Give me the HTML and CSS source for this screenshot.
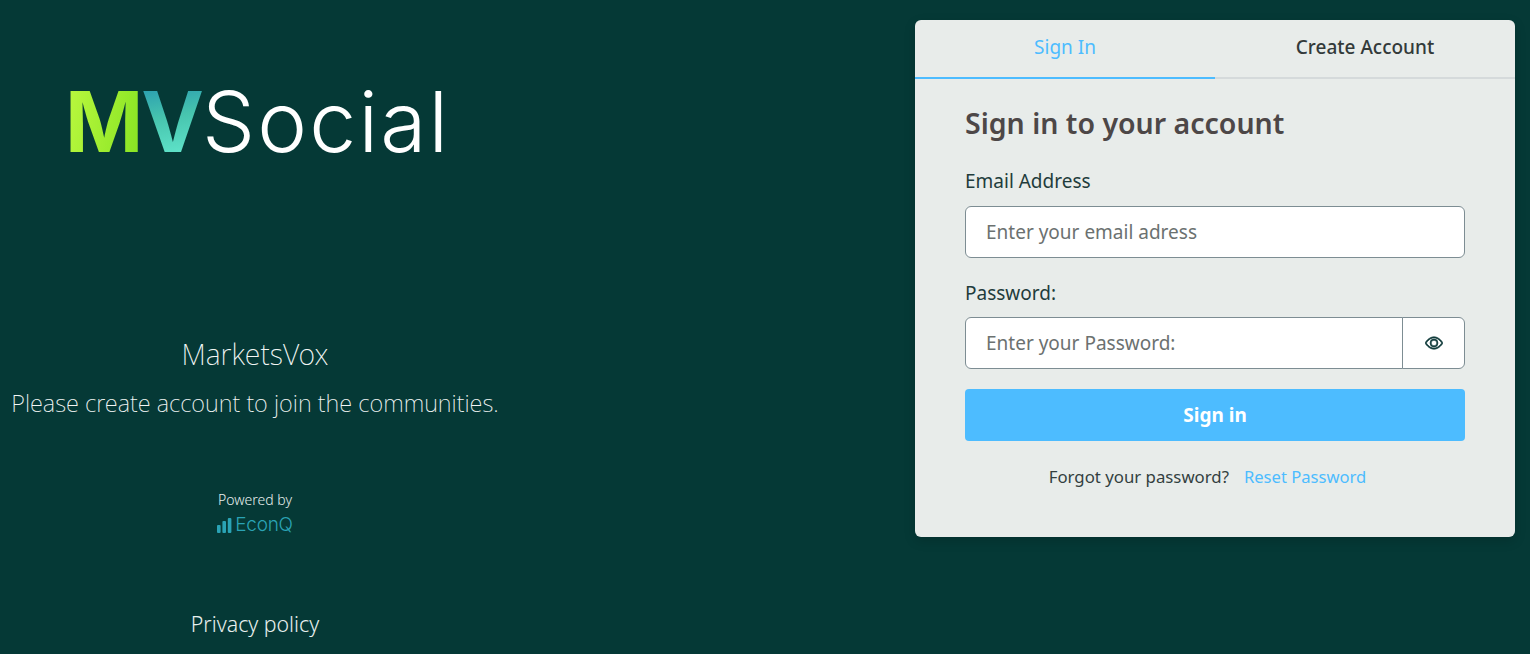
FILE: index.html
```html
<!DOCTYPE html>
<html lang="en">
<head>
    <meta charset="UTF-8">
    <meta name="viewport" content="width=device-width, initial-scale=1.0">
    <title>MVSocial</title>
    <link rel="stylesheet" href="styles.css">
</head>
<body>
    <div class="page">
        <div class="intro">
            <div class="logo"><span class="logo-mv"><span class="logo-m">M</span><span class="logo-v">V</span></span><span class="logo-social">Social</span></div>
            <h2 class="intro-title">MarketsVox</h2>
            <p class="intro-text">Please create account to join the communities.</p>
            <div class="powered">
                <span class="powered-label">Powered by</span>
                <span class="econq">
                    <svg class="econq-bars" width="15" height="15" viewBox="0 0 15 15" fill="#2aa3b5">
                        <rect x="0" y="7" width="3.6" height="8" rx="1"></rect>
                        <rect x="5.4" y="3" width="3.6" height="12" rx="1"></rect>
                        <rect x="10.800" y="0" width="3.6" height="15" rx="1"></rect>
                    </svg>EconQ</span>
            </div>
            <a class="privacy" href="#">Privacy policy</a>
        </div>

        <div class="card">
            <div class="tabs">
                <a class="tab active" href="#">Sign In</a>
                <a class="tab" href="#">Create Account</a>
            </div>
            <form class="form">
                <h1>Sign in to your account</h1>
                <label for="email">Email Address</label>
                <input type="text" id="email" class="input" placeholder="Enter your email adress">
                <label for="password" class="label-pass">Password:</label>
                <div class="input-group">
                    <input type="password" id="password" class="input" placeholder="Enter your Password:">
                    <button type="button" class="eye">
                        <svg width="18" height="18" viewBox="0 0 16 16" fill="#0f3a3a" stroke="#0f3a3a" stroke-width="0.6">
                            <path d="M16 8s-3-5.500-8-5.500S0 8 0 8s3 5.500 8 5.500S16 8 16 8zM1.173 8a13.133 13.133 0 0 1 1.660-2.043C4.120 4.668 5.880 3.500 8 3.500c2.120 0 3.879 1.168 5.168 2.457A13.133 13.133 0 0 1 14.828 8c-.058.087-.122.183-.195.288-.335.480-.830 1.120-1.465 1.755C11.879 11.332 10.119 12.500 8 12.500c-2.120 0-3.879-1.168-5.168-2.457A13.134 13.134 0 0 1 1.172 8z"></path>
                            <path d="M8 5.500a2.500 2.500 0 1 0 0 5 2.500 2.500 0 0 0 0-5zM4.500 8a3.500 3.500 0 1 1 7 0 3.500 3.500 0 0 1-7 0z"></path>
                        </svg>
                    </button>
                </div>
                <button type="button" class="submit">Sign in</button>
                <div class="forgot">
                    <span>Forgot your password?</span>
                    <a href="#">Reset Password</a>
                </div>
            </form>
        </div>
    </div>
</body>
</html>
```

FILE: styles.css
```css
* {
    box-sizing: border-box;
}

body {
    font-family: "Noto Sans", sans-serif;
    background-color: #053936;
    margin: 0;
    padding: 0;
    height: 654px;
    overflow: hidden;
}

.page {
    display: flex;
    justify-content: space-between;
    padding: 20px 15px 0 0;
}

/* left side */
.intro {
    width: 510px;
    display: flex;
    flex-direction: column;
    align-items: center;
    color: #e8f0ee;
}

.logo {
    display: flex;
    align-items: baseline;
    width: 100%;
    padding: 52px 0 0 65px;
    height: 150px;
    line-height: 100px;
    white-space: nowrap;
}

.logo-mv {
    font-family: "Inter", sans-serif;
    font-weight: 700;
    font-size: 84px;
    letter-spacing: -2px;
}

.logo-m {
    background: linear-gradient(100deg, #bdf940, #85e322);
    -webkit-background-clip: text;
    background-clip: text;
    color: transparent;
}

.logo-v {
    background: linear-gradient(170deg, #2a9db0 15%, #47c4ae 45%, #5fe3c9 80%);
    -webkit-background-clip: text;
    background-clip: text;
    color: transparent;
}

.logo-social {
    font-family: "Inter", sans-serif;
    font-weight: 300;
    font-size: 84px;
    letter-spacing: 2.2px;
    color: #ffffff;
}

.intro-title {
    font-size: 28.5px;
    font-weight: 200;
    line-height: 36px;
    margin: 166px 0 0;
    color: #f2f6f5;
}

.intro-text {
    font-size: 23.6px;
    font-weight: 200;
    line-height: 32px;
    margin: 15px 0 0;
    white-space: nowrap;
    color: #f2f6f5;
}

.powered {
    display: flex;
    flex-direction: column;
    align-items: center;
    margin-top: 71px;
}

.powered-label {
    font-size: 14px;
    font-weight: 300;
    line-height: 20px;
}

.econq {
    display: flex;
    align-items: center;
    color: #2aa3b5;
    font-family: "Inter", sans-serif;
    font-size: 19px;
    font-weight: 300;
    line-height: 24px;
    letter-spacing: -0.3px;
    margin-top: 3px;
}

.econq-bars {
    margin-right: 3px;
}

.privacy {
    color: #e8f0ee;
    text-decoration: none;
    font-size: 21.3px;
    font-weight: 300;
    line-height: 30px;
    margin-top: 72px;
}

/* sign in card */
.card {
    width: 600px;
    height: 517px;
    background-color: #e8ecea;
    border-radius: 6px;
    box-shadow: 0 4px 12px rgba(0, 0, 0, 0.15);
}

.tabs {
    display: flex;
    height: 59px;
}

.tab {
    flex: 1;
    text-align: center;
    color: #333a3a;
    text-decoration: none;
    font-size: 19px;
    font-weight: 500;
    line-height: 54px;
    border-bottom: 2px solid #d5dadb;
}

.tab.active {
    color: #4dbcff;
    font-weight: 400;
    border-bottom-color: #4dbcff;
}

.form {
    padding: 24px 50px 0;
}

h1 {
    color: #4d4747;
    font-size: 28.5px;
    font-weight: 600;
    line-height: 40px;
    margin: 0 0 25px;
}

label {
    display: block;
    color: #1f3c3c;
    font-size: 19px;
    line-height: 26px;
    margin-bottom: 12px;
}

.label-pass {
    margin-top: 22px;
    margin-bottom: 11px;
}

.input {
    display: block;
    width: 100%;
    height: 52px;
    padding: 0 20px;
    font-family: "Noto Sans", sans-serif;
    font-size: 19px;
    background-color: #ffffff;
    border: 1px solid #7d8d93;
    border-radius: 6px;
    outline: none;
}

.input::placeholder {
    color: #6b7170;
}

.input-group {
    display: flex;
}

.input-group .input {
    flex: 1;
    border-radius: 6px 0 0 6px;
}

.eye {
    width: 63px;
    height: 52px;
    margin-left: -1px;
    display: flex;
    align-items: center;
    justify-content: center;
    background-color: #ffffff;
    border: 1px solid #7d8d93;
    border-radius: 0 6px 6px 0;
}

.submit {
    display: block;
    width: 100%;
    height: 52px;
    margin-top: 20px;
    background-color: #4dbcff;
    color: #ffffff;
    font-family: "Noto Sans", sans-serif;
    font-size: 19px;
    font-weight: 700;
    border: none;
    border-radius: 4px;
}

.forgot {
    display: flex;
    justify-content: center;
    gap: 15px;
    margin-top: 23px;
    padding-right: 15px;
    font-size: 16.8px;
    line-height: 26px;
    color: #333f3f;
}

.forgot a {
    color: #4dbcff;
    text-decoration: none;
    font-size: 16.6px;
}
```
